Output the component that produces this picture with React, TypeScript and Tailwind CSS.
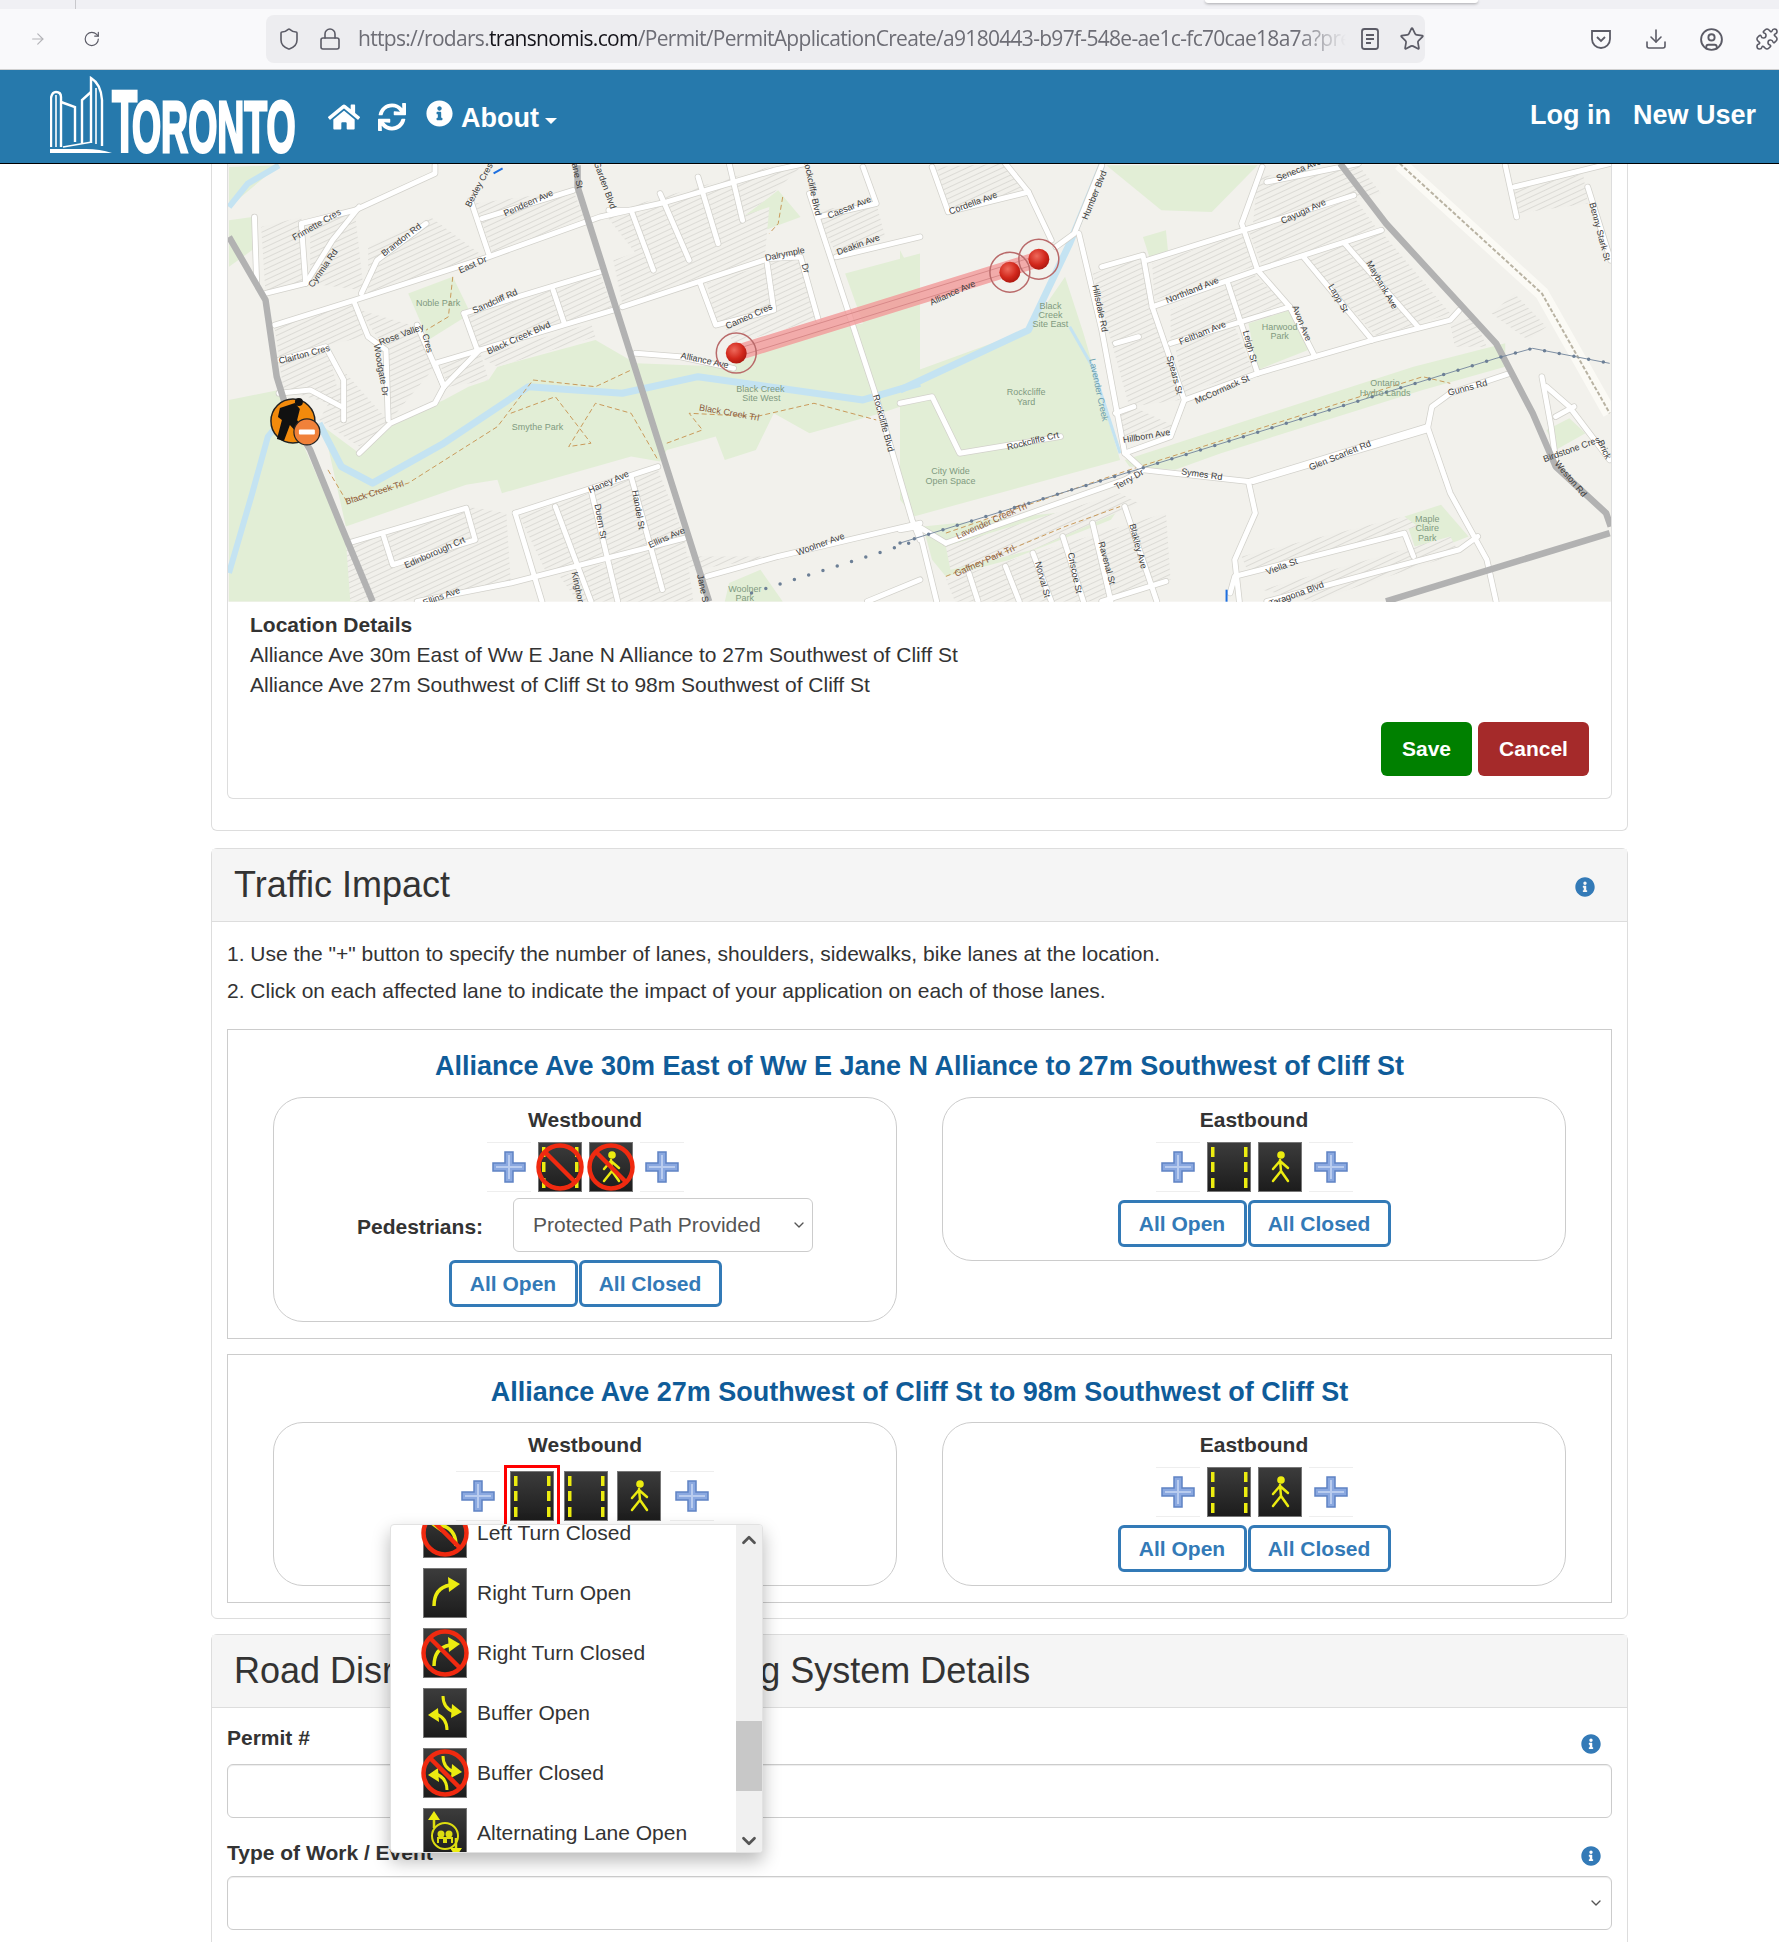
import React from 'react';
import { ArrowRight, RotateCw, Shield, Lock, Star, Download, CircleUser, Puzzle, ChevronUp, ChevronDown } from 'lucide-react';
import { FaHome, FaSync, FaInfoCircle } from 'react-icons/fa';

// the map data is read off the reference in two crops, so each side has its own conversion
const L = (x: number, y: number) => [220 + x / 2.24, 160 + y / 3];
const R = (x: number, y: number) => [900 + x / 2.178, 160 + y / 3];
const pts = (conv: typeof L, p: number[]) => {
  const out: string[] = [];
  for (let i = 0; i < p.length; i += 2) out.push(conv(p[i], p[i + 1]).map((n) => n.toFixed(1)).join(','));
  return out.join(' ');
};

const leftGreen = [
  [18, 720, 130, 690, 340, 1325, 18, 1325],
  [230, 800, 280, 1100, 550, 975, 620, 960, 630, 1000, 920, 890, 985, 905, 1000, 870, 1110, 830, 1130, 900, 1200, 870, 1240, 760, 1320, 820, 1480, 760, 1568, 720, 1568, 280, 1400, 340, 1440, 490, 1340, 510, 1170, 600, 1140, 620, 930, 610, 840, 540, 620, 620, 600, 660, 555, 680, 500, 720, 400, 780, 310, 880],
  [18, 180, 70, 170, 80, 260, 18, 320],
  [420, 400, 520, 350, 560, 460, 465, 540],
  [1120, 220, 1250, 90, 1300, 170, 1200, 220, 1130, 270],
  [1130, 1325, 1140, 1270, 1210, 1230, 1260, 1325],
  [18, 20, 130, 15, 18, 140],
];
const rightGreen = [
  [0, 270, 45, 390, 0, 440],
  [0, 650, 280, 510, 360, 350, 400, 520, 480, 900, 30, 1070, 0, 1020],
  [490, 900, 1120, 620, 1320, 550, 1320, 620, 1140, 690, 700, 880, 600, 930, 500, 920],
  [450, 15, 780, 15, 680, 155, 570, 150],
  [530, 230, 580, 210, 585, 280, 545, 295],
  [760, 490, 850, 450, 890, 570, 780, 630],
  [1100, 1070, 1180, 1035, 1240, 1130, 1130, 1190],
  [1410, 810, 1460, 775, 1495, 820, 1430, 870],
  [50, 1100, 480, 1040, 460, 1080, 240, 1200, 100, 1250, 70, 1200],
];
const leftHatch = [
  [90, 200, 180, 170, 190, 370, 100, 400],
  [200, 190, 300, 150, 320, 390, 200, 370],
  [330, 260, 470, 170, 590, 290, 330, 400],
  [570, 130, 790, 90, 820, 190, 610, 280],
  [860, 160, 1230, 20, 1300, 20, 1230, 110, 1040, 300, 960, 330],
  [550, 470, 850, 340, 880, 450, 580, 570],
  [310, 450, 440, 500, 480, 620, 380, 780, 370, 570],
  [130, 600, 240, 560, 270, 740, 140, 690],
  [1090, 370, 1230, 310, 1240, 440, 1110, 490],
  [1240, 300, 1300, 290, 1340, 480, 1150, 550, 1130, 500],
  [280, 1140, 550, 1040, 640, 1060, 650, 1270, 400, 1325, 290, 1325],
  [670, 1070, 980, 930, 1040, 1130, 730, 1240],
  [760, 1250, 1040, 1140, 1060, 1325, 800, 1325],
  [1330, 150, 1470, 130, 1490, 230, 1380, 280],
  [490, 610, 580, 570, 600, 660, 510, 680],
  [580, 590, 830, 490, 840, 530, 620, 620],
  [880, 300, 1230, 140, 1220, 290, 900, 430],
  [280, 640, 380, 790, 310, 860, 220, 780],
  [120, 500, 300, 430, 320, 530, 130, 590],
  [1010, 1190, 1250, 1190, 1060, 1230],
];
const rightHatch = [
  [420, 340, 530, 290, 610, 720, 500, 740],
  [470, 760, 510, 740, 600, 800, 490, 830],
  [550, 310, 750, 220, 770, 320, 555, 420],
  [760, 210, 990, 110, 1040, 205, 790, 320],
  [590, 450, 770, 340, 840, 430, 590, 540],
  [880, 290, 1050, 215, 1200, 460, 1040, 530],
  [600, 560, 730, 500, 770, 630, 620, 700],
  [80, 20, 230, 10, 280, 90, 105, 150],
  [780, 50, 1000, 15, 1050, 100, 770, 190],
  [1340, 90, 1490, 40, 1500, 130, 1345, 160],
  [100, 1160, 480, 1000, 520, 1030, 290, 1170, 110, 1230],
  [100, 1260, 580, 1060, 590, 1260, 440, 1325, 120, 1325],
  [745, 1190, 1100, 1070, 1130, 1100, 760, 1240],
  [790, 1290, 1200, 1130, 1220, 1180, 900, 1325],
  [1290, 460, 1340, 400, 1410, 500, 1370, 540],
  [1200, 490, 1250, 470, 1280, 560, 1210, 560],
];
const leftRoads = [
  [120, 495, 300, 420, 600, 290, 850, 170, 1000, 125, 1240, 30, 1310, 10],
  [480, 610, 580, 570, 880, 450],
  [900, 440, 1230, 295, 1300, 290, 1340, 480],
  [545, 460, 850, 335],
  [545, 460, 575, 570],
  [745, 390, 770, 490],
  [100, 400, 190, 370, 180, 190, 300, 150, 480, 40, 480, 15],
  [190, 370, 250, 240, 310, 140],
  [315, 400, 350, 300, 460, 190],
  [300, 430, 330, 530, 370, 570, 375, 780],
  [440, 495, 500, 680, 480, 730, 380, 790, 310, 880],
  [130, 700, 200, 690, 270, 740],
  [130, 600, 235, 560, 275, 660, 275, 780],
  [585, 175, 790, 90],
  [560, 120, 600, 280],
  [480, 610, 500, 680],
  [580, 570, 500, 680],
  [870, 150, 920, 150, 970, 330],
  [985, 100, 1050, 300],
  [1070, 50, 1115, 250],
  [1140, 10, 1170, 180],
  [1320, 100, 1465, 690, 1550, 1080, 1568, 1140],
  [1340, 170, 1470, 130, 1440, 20],
  [1380, 290, 1568, 230],
  [1075, 370, 1110, 495, 1240, 450, 1225, 310],
  [930, 580, 1030, 590, 1150, 625],
  [660, 1060, 980, 920],
  [285, 1150, 550, 1045, 570, 1140, 385, 1215, 365, 1130],
  [660, 1060, 720, 1325],
  [750, 1040, 830, 1325],
  [830, 990, 890, 1325],
  [920, 950, 990, 1290],
  [440, 1325, 650, 1270, 1040, 1135],
  [1090, 1250, 1250, 1190, 1568, 1090],
  [1450, 1325, 1568, 1260],
  [75, 170, 80, 370],
];
const rightRoads = [
  [440, 15, 380, 220, 340, 260],
  [390, 220, 440, 510, 490, 880, 530, 930, 760, 965, 1150, 800],
  [70, 20, 105, 155, 280, 95, 330, 240],
  [280, 95, 230, 10],
  [800, 65, 1000, 10],
  [790, 20, 745, 190, 780, 330, 850, 440, 905, 590],
  [540, 300, 750, 210, 990, 105],
  [440, 320, 530, 285, 550, 440, 620, 720, 590, 830, 490, 880],
  [550, 440, 780, 330, 1050, 210],
  [590, 550, 850, 440],
  [715, 370, 780, 640],
  [620, 720, 780, 640, 1030, 540, 1200, 480, 1220, 450],
  [880, 290, 1030, 540],
  [970, 250, 1130, 500],
  [0, 730, 70, 710, 130, 880, 350, 830],
  [100, 1150, 490, 960, 530, 930],
  [770, 965, 1150, 810, 1160, 740, 1200, 700, 1330, 640],
  [1150, 800, 1200, 1000, 1280, 1200, 1300, 1325],
  [760, 965, 775, 1060, 730, 1200, 740, 1325],
  [720, 1300, 730, 1250, 1100, 1120, 1120, 1190],
  [800, 1325, 1220, 1170, 1260, 1130],
  [490, 1040, 560, 1325],
  [420, 1090, 460, 1325],
  [355, 1130, 400, 1325],
  [290, 1180, 330, 1325],
  [150, 1240, 170, 1325],
  [230, 1220, 260, 1325],
  [440, 1325, 580, 1265],
  [0, 1110, 40, 1100, 80, 1325],
  [40, 1100, 100, 1150],
  [1500, 80, 1550, 300],
  [1320, 15, 1345, 170],
  [1340, 80, 1548, 10],
  [1400, 650, 1420, 800, 1430, 900],
  [1410, 680, 1460, 740, 1548, 900],
  [1430, 770, 1470, 740],
  [470, 550, 520, 530],
  [470, 760, 510, 740],
];

type Label = [string, number, number, number, string?];
const GREEN = '#7f9a80';
const TRAIL = '#8a5a3c';
const leftLabels: Label[] = [
  ['Frimette Cres', 215, 195, -30], ['Bexley Cres', 580, 75, -62], ['Pendeen Ave', 690, 130, -24], ['Garden Blvd', 860, 75, 70],
  ['Brandon Rd', 405, 240, -38], ['Cynmia Rd', 230, 325, -55], ['East Dr', 565, 315, -24], ['Noble Park', 487, 432, 0, GREEN],
  ['Sandcliff Rd', 615, 425, -24], ['Rose Valley', 405, 525, -20], ['Cres', 462, 550, 75], ['Woodgate Dr', 358, 630, 80],
  ['Clairton Cres', 187, 585, -15], ['Black Creek Blvd', 668, 535, -24], ['Alliance Ave', 1085, 603, 12], ['Cameo Cres', 1185, 470, -24],
  ['Dalrymple', 1265, 283, -12], ['Dr', 1310, 325, 75], ['Caesar Ave', 1410, 143, -22], ['Deakin Ave', 1430, 255, -20],
  ['Rockcliffe Blvd', 1325, 80, 78], ['Rockcliffe Blvd', 1485, 790, 75], ['Black Creek', 1210, 690, 0, GREEN], ['Site West', 1212, 717, 0, GREEN],
  ['Smythe Park', 710, 803, 0, GREEN], ['Black Creek Trl', 345, 1000, -18, TRAIL], ['Black Creek Trl', 1140, 760, 10, TRAIL],
  ['Haney Ave', 870, 968, -24], ['Duern St', 850, 1085, 80], ['Handel St', 935, 1050, 80], ['Ellins Ave', 1000, 1135, -24],
  ['Edinborough Crt', 480, 1180, -24], ['Woolner Ave', 1345, 1155, -20], ['Jane St', 1080, 1290, 78], ['Jane St', 797, 40, 78],
  ['Woolner', 1175, 1290, 0, GREEN], ['Park', 1175, 1318, 0, GREEN], ['Ellins Ave', 495, 1312, -20], ['Kinghorn', 800, 1290, 78],
];
const rightLabels: Label[] = [
  ['Cordella Ave', 160, 130, -20], ['Humber Blvd', 425, 105, -68], ['Seneca Ave', 870, 30, -22], ['Cayuga Ave', 880, 155, -24],
  ['Northland Ave', 638, 392, -22], ['Feltham Ave', 660, 520, -22], ['Leigh St', 762, 560, 75], ['Avon Ave', 875, 490, 68],
  ['Lapp St', 955, 415, 60], ['Maybank Ave', 1050, 375, 60], ['Harwood', 828, 503, 0, GREEN], ['Park', 828, 530, 0, GREEN],
  ['Hillsdale Rd', 435, 445, 78], ['Spears St', 598, 645, 75], ['McCormack St', 703, 690, -24], ['Alliance Ave', 115, 400, -24],
  ['Black', 328, 440, 0, GREEN], ['Creek', 328, 466, 0, GREEN], ['Site East', 328, 493, 0, GREEN], ['Rockcliffe', 275, 697, 0, GREEN],
  ['Yard', 275, 727, 0, GREEN], ['Rockcliffe Crt', 290, 845, -14], ['Hillborn Ave', 538, 830, -10], ['Ontario', 1058, 672, 0, GREEN],
  ['Hydro Lands', 1058, 700, 0, GREEN], ['Gunns Rd', 1238, 685, -15], ['Glen Scarlett Rd', 960, 888, -22], ['Symes Rd', 658, 945, 8],
  ['Terry Dr', 500, 960, -30], ['City Wide', 110, 936, 0, GREEN], ['Open Space', 110, 964, 0, GREEN], ['Lavender Creek Trl', 200, 1085, -24, TRAIL],
  ['Gaffney Park Trl', 185, 1205, -24, TRAIL], ['Blakley Ave', 518, 1160, 75], ['Ravenal St', 450, 1210, 75], ['Criscoe St', 380, 1240, 78],
  ['Norval St', 310, 1260, 75], ['Viella St', 833, 1222, -20], ['Taragona Blvd', 865, 1305, -20], ['Maple', 1150, 1080, 0, GREEN],
  ['Claire', 1150, 1108, 0, GREEN], ['Park', 1150, 1136, 0, GREEN], ['Birdstone Cres', 1465, 870, -20], ['Weston Rd', 1462, 958, 50],
  ['Benny Stark St', 1525, 215, 75], ['Brick', 1535, 870, 65], ['Lavender Creek', 432, 690, 78, '#6d9fae'],
];

const TrafficMap = () => {
  const label = (conv: typeof L, l: Label, i: number) => {
    const [x, y] = conv(l[1], l[2]);
    return (
      <text key={i} x={x} y={y} fontSize={9} fill={l[4] || '#3a3a3a'} textAnchor="middle" dominantBaseline="middle" transform={`rotate(${l[3]} ${x} ${y})`}>
        {l[0]}
      </text>
    );
  };
  const road = (conv: typeof L, p: number[], i: number, color: string, w: number) => (
    <polyline key={i} points={pts(conv, p)} fill="none" stroke={color} strokeWidth={w} strokeLinejoin="round" strokeLinecap="round" />
  );
  return (
    <svg viewBox="227 164 1385 438" className="block w-full h-[438px] font-['Liberation_Sans',sans-serif]">
      <defs>
        <pattern id="hatch" width="5" height="5" patternUnits="userSpaceOnUse" patternTransform="rotate(65)">
          <rect width="5" height="5" fill="#f1f0eb" />
          <line x1="0" y1="0" x2="0" y2="5" stroke="#cfcec8" strokeWidth="1.2" />
        </pattern>
        <radialGradient id="pin" cx="0.4" cy="0.35" r="0.7">
          <stop offset="0" stopColor="#ee6a5c" />
          <stop offset="0.6" stopColor="#d2281c" />
          <stop offset="1" stopColor="#a8160e" />
        </radialGradient>
      </defs>
      <rect x="227" y="164" width="1385" height="438" fill="#f2f1ec" />
      {leftGreen.map((p, i) => <polygon key={i} points={pts(L, p)} fill="#e2eed6" />)}
      {rightGreen.map((p, i) => <polygon key={i} points={pts(R, p)} fill="#e2eed6" />)}
      {leftHatch.map((p, i) => <polygon key={i} points={pts(L, p)} fill="url(#hatch)" />)}
      {rightHatch.map((p, i) => <polygon key={i} points={pts(R, p)} fill="url(#hatch)" />)}

      {/* creeks */}
      <polyline points={pts(L, [18, 1240, 70, 1000, 105, 830, 130, 790])} fill="none" stroke="#c4e3f2" strokeWidth={6} />
      <polyline points={pts(L, [18, 140, 60, 70, 130, 15])} fill="none" stroke="#c4e3f2" strokeWidth={6} />
      <polyline points={pts(L, [220, 790, 270, 920, 340, 970, 500, 850, 690, 680, 900, 700, 1070, 650, 1440, 720, 1568, 670])} fill="none" stroke="#c4e3f2" strokeWidth={7} strokeLinejoin="round" />
      <polyline points={pts(R, [0, 690, 280, 510, 370, 250, 440, 15])} fill="none" stroke="#c4e3f2" strokeWidth={7} strokeLinejoin="round" />
      <polyline points={pts(R, [370, 500, 420, 620, 480, 880])} fill="none" stroke="#c4e3f2" strokeWidth={3} />

      {/* rail, then trails */}
      <polyline points={pts(R, [1090, 10, 1400, 400, 1548, 760])} fill="none" stroke="#fbfaf5" strokeWidth={14} />
      <polyline points={pts(R, [1090, 10, 1400, 400, 1548, 760])} fill="none" stroke="#b9b3a3" strokeWidth={2} strokeDasharray="4 2" />
      <g fill="none" stroke="#c99a5a" strokeWidth={1} strokeDasharray="5 3">
        <polyline points={pts(L, [240, 930, 280, 1020, 420, 970, 620, 800, 700, 660, 840, 680, 920, 630])} />
        <polyline points={pts(L, [650, 760, 750, 710, 830, 850, 780, 860, 840, 730, 920, 760, 980, 900])} />
        <polyline points={pts(L, [1000, 850, 1080, 810, 1050, 760, 1200, 770, 1330, 730, 1470, 780])} />
        <polyline points={pts(L, [520, 350, 510, 470, 460, 510])} />
        <polyline points={pts(L, [1260, 110, 1250, 190, 1230, 220])} />
        <polyline points={pts(R, [100, 1120, 500, 930, 1140, 650, 1200, 670])} />
        <polyline points={pts(R, [100, 1250, 360, 1100, 480, 1040])} />
      </g>

      {leftRoads.map((p, i) => road(L, p, i, '#d2d1cb', 6.5))}
      {rightRoads.map((p, i) => road(R, p, i, '#d2d1cb', 6.5))}
      {leftRoads.map((p, i) => road(L, p, i, '#ffffff', 5))}
      {rightRoads.map((p, i) => road(R, p, i, '#ffffff', 5))}

      {/* highways */}
      <g fill="none" stroke="#b2b2b2" strokeWidth={6.5} strokeLinejoin="round">
        <polyline points={pts(L, [800, 15, 800, 80, 1095, 1325])} />
        <polyline points={pts(L, [18, 230, 100, 420, 125, 650, 150, 760, 200, 870, 270, 1100, 340, 1325])} />
        <polyline points={pts(R, [960, 10, 1060, 190, 1300, 550, 1380, 760, 1430, 920, 1540, 1060, 1550, 1100])} />
        <polyline points={pts(R, [1060, 1325, 1548, 1120])} />
      </g>

      {/* hydro corridor */}
      <polyline points={pts(R, [0, 1150, 1300, 595, 1380, 565, 1548, 610])} fill="none" stroke="#7d8fa3" strokeWidth={1} />
      <polyline points={pts(R, [0, 1150, 1300, 595, 1380, 565, 1548, 610])} fill="none" stroke="#6c7f96" strokeWidth={3.5} strokeLinecap="round" strokeDasharray="0 15" />
      <polyline points={pts(L, [1190, 1300, 1568, 1140])} fill="none" stroke="#6c7f96" strokeWidth={3.5} strokeLinecap="round" strokeDasharray="0 15" />

      {/* selected road segment */}
      <line x1="736" y1="353" x2="1039" y2="259" stroke="#f39a9a" strokeWidth={16} opacity={0.8} />
      <line x1="736" y1="349" x2="1039" y2="255" stroke="#d88a8a" strokeWidth={1} />
      <line x1="736" y1="357" x2="1039" y2="263" stroke="#d88a8a" strokeWidth={1} />

      {leftLabels.map((l, i) => label(L, l, i))}
      {rightLabels.map((l, i) => label(R, l, i))}
      <path d="M493 173 L502 168" stroke="#1d6fe0" strokeWidth={2} />
      <path d="M1227 590 V602" stroke="#1d6fe0" strokeWidth={2} />

      {[[736, 353], [1010, 272], [1039, 259]].map(([x, y]) => (
        <g key={x}>
          <circle cx={x} cy={y} r={20} fill="none" stroke="#b96a6a" strokeWidth={1.5} />
          <circle cx={x} cy={y} r={10.5} fill="url(#pin)" />
        </g>
      ))}

      {/* work zone marker */}
      <circle cx="292" cy="421" r="22" fill="#f28a0c" stroke="#222" strokeWidth={1.5} />
      <path d="M279 408 L294 403 L299 409 L296 421 L303 432 L298 435 L289 425 L283 441 L276 439 L281 420 L277 417 Z" fill="#111" />
      <circle cx="298" cy="402" r="4" fill="#111" />
      <path d="M294 419 L306 435" stroke="#111" strokeWidth={2} />
      <circle cx="306" cy="432" r="13" fill="#f0813a" stroke="#222" strokeWidth={1.2} />
      <rect x="298" y="429.5" width="16" height="5" rx="1" fill="#fff" />
    </svg>
  );
};

const NoSign = () => (
  <g fill="none" stroke="#f02a10" strokeWidth={4.5}>
    <circle cx="22" cy="25" r="21.5" />
    <line x1="7" y1="10" x2="37" y2="40" />
  </g>
);

// one lane tile of the traffic impact widget
const LaneIcon = ({ kind, closed }: { kind: 'lane' | 'ped' | 'left' | 'right' | 'buffer' | 'alt'; closed?: boolean }) => (
  <svg width="44" height="50" viewBox="0 0 44 50" className="overflow-visible shrink-0">
    <defs>
      <linearGradient id="tile" x1="0" y1="0" x2="0" y2="1">
        <stop offset="0" stopColor="#3c3c3c" />
        <stop offset="1" stopColor="#1c1c1c" />
      </linearGradient>
    </defs>
    <rect x="0.5" y="0.5" width="43" height="49" fill="url(#tile)" stroke="#777" />
    {kind === 'lane' && (
      <g fill="#ecec10">
        {[5, 20, 36].map((y) => (
          <React.Fragment key={y}>
            <rect x="4" y={y} width="3.5" height="10" />
            <rect x="37" y={y} width="3.5" height="10" />
          </React.Fragment>
        ))}
      </g>
    )}
    {kind === 'ped' && (
      <g stroke="#ecec10" strokeWidth={2.5} fill="none" strokeLinecap="round" strokeLinejoin="round">
        <circle cx="23" cy="13" r="3.8" fill="#ecec10" strokeWidth={0} />
        <path d="M22 18 L23 29 L15 39 M23 29 L30 39 M22 19 L15 27 M22 19 L30 26" />
      </g>
    )}
    {kind === 'right' && (
      <g stroke="#ecec10" fill="none" strokeWidth={3.5}>
        <path d="M11 38 Q11 20 27 17" />
        <path d="M25 9 L37 16 L26 24 Z" fill="#ecec10" strokeWidth={0} />
      </g>
    )}
    {kind === 'left' && (
      <g stroke="#ecec10" fill="none" strokeWidth={3.5}>
        <path d="M33 38 Q33 20 17 17" />
        <path d="M19 9 L7 16 L18 24 Z" fill="#ecec10" strokeWidth={0} />
      </g>
    )}
    {kind === 'buffer' && (
      <g stroke="#ecec10" fill="none" strokeWidth={3}>
        <path d="M20 8 Q20 20 31 24" />
        <path d="M29 16 L39 24 L28 30 Z" fill="#ecec10" strokeWidth={0} />
        <path d="M24 42 Q24 30 13 26" />
        <path d="M15 20 L5 27 L16 34 Z" fill="#ecec10" strokeWidth={0} />
      </g>
    )}
    {kind === 'alt' && (
      <g stroke="#dcdc10" fill="none" strokeWidth={2}>
        <path d="M11 6 V20 M33 30 V46" strokeWidth={2.5} />
        <path d="M5 12 L11 3 L17 12 Z M27 40 L33 49 L39 40 Z" fill="#ecec10" strokeWidth={0} />
        <circle cx="22" cy="28" r="13" />
        <circle cx="18" cy="26" r="2.5" fill="#dcdc10" />
        <circle cx="26" cy="26" r="2.5" fill="#dcdc10" />
        <path d="M15 35 V30 H21 V35 M23 35 V30 H29 V35" />
      </g>
    )}
    {closed && <NoSign />}
  </svg>
);

const PlusTile = () => (
  <div className="w-[44px] h-[50px] border-y border-[#eeeeee] flex items-center justify-center shrink-0">
    <svg width="34" height="32" viewBox="0 0 34 32">
      <path d="M13 1 H21 V12 H33 V20 H21 V31 H13 V20 H1 V12 H13 Z" fill="#8aa8e0" stroke="#5f82c4" strokeWidth={1.5} />
      <path d="M17 4 V28 M4 16 H30" stroke="#b9ccef" strokeWidth={2} />
    </svg>
  </div>
);

const OpenClosed = () => (
  <div className="flex justify-center gap-px">
    <button className="h-[47px] w-[129px] border-[3px] border-[#337ab7] rounded-md bg-white text-[21px] font-bold text-[#337ab7]">All Open</button>
    <button className="h-[47px] w-[143px] border-[3px] border-[#337ab7] rounded-md bg-white text-[21px] font-bold text-[#337ab7]">All Closed</button>
  </div>
);

const Eastbound = () => (
  <div className="w-[624px] h-[164px] border border-[#cccccc] rounded-[30px] pt-[7px]">
    <div className="text-[21px] leading-[30px] font-bold text-center">Eastbound</div>
    <div className="flex justify-center gap-[7px] mt-[7px] mb-[8px]">
      <PlusTile />
      <LaneIcon kind="lane" />
      <LaneIcon kind="ped" />
      <PlusTile />
    </div>
    <OpenClosed />
  </div>
);

const dropdownItems: { name: string; kind: 'left' | 'right' | 'buffer' | 'alt'; closed?: boolean }[] = [
  { name: 'Left Turn Closed', kind: 'left', closed: true },
  { name: 'Right Turn Open', kind: 'right' },
  { name: 'Right Turn Closed', kind: 'right', closed: true },
  { name: 'Buffer Open', kind: 'buffer' },
  { name: 'Buffer Closed', kind: 'buffer', closed: true },
  { name: 'Alternating Lane Open', kind: 'alt' },
];

const LaneDropdown = () => (
  <div className="absolute left-[390px] top-[1524px] w-[373px] h-[329px] bg-white rounded-sm border border-[#e2e2e2] shadow-[0_8px_18px_rgba(0,0,0,0.28)] flex overflow-hidden z-10">
    <div className="flex-1 -mt-[22px]">
      {dropdownItems.map((item) => (
        <div key={item.name} className="h-[60px] pl-[32px] flex items-center gap-[10px] text-[21px]">
          <LaneIcon kind={item.kind} closed={item.closed} />
          <span>{item.name}</span>
        </div>
      ))}
    </div>
    <div className="relative w-[26px] bg-[#f0f0f0]">
      <div className="mt-[196px] h-[70px] bg-[#c8c8c8]" />
      <ChevronUp className="absolute top-[4px] left-[2px] text-[#555555]" size={22} strokeWidth={3} />
      <ChevronDown className="absolute bottom-[0px] left-[2px] text-[#555555]" size={22} strokeWidth={3} />
    </div>
  </div>
);

const BrowserBar = () => (
  <>
    <div className="h-[9px] bg-[#f0f0f4] relative">
      <div className="absolute left-[75px] top-0 w-px h-[9px] bg-[#c8c8cc]" />
      <div className="absolute left-[1205px] top-0 w-[273px] h-[3px] bg-white rounded-b shadow-[0_1px_3px_rgba(0,0,0,0.3)]" />
    </div>
    <div className="h-[61px] bg-[#f9f9fb] border-b border-[#d0d0d0] flex items-center relative overflow-hidden">
      <ArrowRight className="ml-[29px] text-[#b4b4b8]" size={24} strokeWidth={1.6} />
      <RotateCw className="ml-[36px] text-[#5b5b66]" size={24} strokeWidth={1.6} />
      <div className="ml-[166px] w-[1174px] h-[48px] bg-[#ededf0] rounded-lg flex items-center pl-[11px]">
        <Shield className="text-[#5b5b66] shrink-0" size={24} strokeWidth={1.6} />
        <Lock className="ml-[17px] text-[#5b5b66] shrink-0" size={24} strokeWidth={1.6} />
        <div className="ml-[16px] w-[988px] overflow-hidden whitespace-nowrap text-[21px] text-[#6d6d75] font-['Open_Sans',sans-serif] tracking-[-0.7px] [mask-image:linear-gradient(to_left,transparent,black_50px)]">
          https://rodars.<span className="text-[#15141a]">transnomis.com</span>/Permit/PermitApplicationCreate/a9180443-b97f-548e-ae1c-fc70cae18a7a?preview=true
        </div>
        <svg width="20" height="24" viewBox="0 0 20 24" className="ml-[14px] shrink-0" fill="none" stroke="#5b5b66" strokeWidth={1.8}>
          <rect x="2" y="2" width="16" height="20" rx="2.5" />
          <path d="M6 8 H14 M6 12 H14 M6 16 H11" />
        </svg>
        <Star className="ml-[19px] text-[#5b5b66] shrink-0" size={26} strokeWidth={1.6} />
      </div>
      <svg width="24" height="24" viewBox="0 0 24 24" className="ml-[164px] shrink-0" fill="none" stroke="#5b5b66" strokeWidth={1.8}>
        <path d="M3 4 H21 V12 A9 9 0 0 1 3 12 Z" />
        <path d="M8 10 L12 14 L16 10" />
      </svg>
      <Download className="ml-[31px] text-[#5b5b66] shrink-0" size={24} strokeWidth={1.6} />
      <CircleUser className="ml-[31px] text-[#5b5b66] shrink-0" size={25} strokeWidth={1.8} />
      <Puzzle className="ml-[31px] text-[#5b5b66] shrink-0" size={24} strokeWidth={1.6} />
    </div>
  </>
);

const Navbar = () => (
  <div className="h-[94px] bg-[#2679ac] border-b border-black flex items-center text-white font-bold pl-[50px] pr-[23px]">
    <svg width="62" height="78" viewBox="50 76 62 78" className="shrink-0 -mt-[3px]" fill="none" stroke="#fff" strokeWidth={2.4}>
      <path d="M51 147 V98 Q52 92 56 92 Q61 92 61 97 V147" />
      <path d="M56 95 V147" strokeWidth={1.6} />
      <path d="M61 102 L75 107 V142" />
      <path d="M82 143 V100 L91 92" />
      <path d="M91 143 V78 Q101 84 102 100 V146" />
      <path d="M96 88 V144" strokeWidth={1.6} />
      <path d="M63 147 L92 142" strokeWidth={1.6} />
      <path d="M50 149 H86 Q100 149 112 153 H50 Z" fill="#fff" strokeWidth={0} />
    </svg>
    <div className="w-[185px] h-[64px] relative -mt-[3px] font-['Liberation_Sans',sans-serif]">
      <span className="absolute left-0 top-[-6px] text-[88px] leading-[88px] origin-left scale-x-[0.47] [-webkit-text-stroke:3px_white]">T</span>
      <span className="absolute left-[20px] top-[8px] text-[72px] leading-[72px] origin-left scale-x-[0.52] [-webkit-text-stroke:3px_white]">ORONTO</span>
    </div>
    <FaHome className="ml-[31px]" size={32} />
    <FaSync className="ml-[18px]" size={28} />
    <FaInfoCircle className="ml-[20px] -mt-[6px]" size={27} />
    <span className="ml-[8px] mt-[3px] text-[27px]">About</span>
    <span className="ml-[6px] mt-[9px] w-0 h-0 border-x-[6px] border-x-transparent border-t-[6px] border-t-white" />
    <span className="ml-auto text-[27px] -mt-[2px]">Log in</span>
    <span className="ml-[22px] text-[27px] -mt-[2px]">New User</span>
  </div>
);

const CardHeader = ({ title, info }: { title: string; info?: boolean }) => (
  <div className="h-[73px] bg-[#f5f5f5] border-b border-[#dddddd] flex items-center justify-between pl-[22px] pr-[32px]">
    <h3 className="text-[36px] text-[#333333]">{title}</h3>
    {info && <FaInfoCircle className="text-[#337ab7] mt-[3px]" size={20} />}
  </div>
);

export default function App() {
  return (
    <div className="relative h-[1942px] overflow-hidden bg-white font-['Liberation_Sans',Arial,sans-serif] text-[#333333]">
      <BrowserBar />
      <Navbar />
      <main className="ml-[211px] w-[1417px]">
        {/* location card, scrolled so its top is cut off by the navbar */}
        <section className="h-[667px] border-x border-b border-[#dddddd] rounded-b-md px-[15px]">
          <div className="h-[635px] border-x border-b border-[#dddddd] rounded-b-md">
            <TrafficMap />
            <div className="pl-[22px] pr-[22px] pt-[8px] text-[21px] leading-[30px]">
              <div className="font-bold">Location Details</div>
              <div>Alliance Ave 30m East of Ww E Jane N Alliance to 27m Southwest of Cliff St</div>
              <div>Alliance Ave 27m Southwest of Cliff St to 98m Southwest of Cliff St</div>
              <div className="flex justify-end gap-[6px] mt-[22px]">
                <button className="h-[54px] w-[91px] bg-[#008000] text-white font-bold rounded-md">Save</button>
                <button className="h-[54px] w-[111px] bg-[#a52a2a] text-white font-bold rounded-md">Cancel</button>
              </div>
            </div>
          </div>
        </section>

        <section className="mt-[17px] h-[771px] border border-[#dddddd] rounded-md">
          <CardHeader title="Traffic Impact" info />
          <div className="px-[15px] pt-[13px]">
            <div className="text-[21px] leading-[37px] mb-[20px]">
              <p>1. Use the "+" button to specify the number of lanes, shoulders, sidewalks, bike lanes at the location.</p>
              <p>2. Click on each affected lane to indicate the impact of your application on each of those lanes.</p>
            </div>

            <div className="h-[310px] border border-[#cccccc] px-[45px]">
              <h4 className="text-[27px] leading-[36px] font-bold text-[#0f5c99] text-center pt-[18px] h-[67px]">
                Alliance Ave 30m East of Ww E Jane N Alliance to 27m Southwest of Cliff St
              </h4>
              <div className="flex justify-between">
                <div className="w-[624px] h-[225px] border border-[#cccccc] rounded-[30px] pt-[7px]">
                  <div className="text-[21px] leading-[30px] font-bold text-center">Westbound</div>
                  <div className="flex justify-center gap-[7px] mt-[7px]">
                    <PlusTile />
                    <LaneIcon kind="lane" closed />
                    <LaneIcon kind="ped" closed />
                    <PlusTile />
                  </div>
                  <div className="flex justify-center items-center mt-[6px] mb-[8px] pr-px">
                    <label className="text-[21px] font-bold mt-[4px] w-[157px] pl-[1px]">Pedestrians:</label>
                    <div className="relative">
                      <select className="appearance-none w-[300px] h-[54px] border border-[#cccccc] rounded-md pl-[19px] text-[21px] text-[#555555] bg-white">
                        <option>Protected Path Provided</option>
                      </select>
                      <ChevronDown className="absolute right-[6px] top-[19px] text-[#555555] pointer-events-none" size={16} strokeWidth={2} />
                    </div>
                  </div>
                  <OpenClosed />
                </div>
                <Eastbound />
              </div>
            </div>

            <div className="mt-[15px] h-[249px] border border-[#cccccc] px-[45px]">
              <h4 className="text-[27px] leading-[36px] font-bold text-[#0f5c99] text-center pt-[19px] h-[67px]">
                Alliance Ave 27m Southwest of Cliff St to 98m Southwest of Cliff St
              </h4>
              <div className="flex justify-between">
                <div className="w-[624px] h-[164px] border border-[#cccccc] rounded-[30px] pt-[7px]">
                  <div className="text-[21px] leading-[30px] font-bold text-center">Westbound</div>
                  <div className="flex justify-center items-center gap-[3px] mt-[7px] h-[57px]">
                    <PlusTile />
                    <div className="border-[3px] border-[#ff0000] p-[3px] mx-[1px] leading-[0]"><LaneIcon kind="lane" /></div>
                    <LaneIcon kind="lane" />
                    <div className="w-[3px]" />
                    <LaneIcon kind="ped" />
                    <div className="w-[3px]" />
                    <PlusTile />
                  </div>
                  <OpenClosed />
                </div>
                <Eastbound />
              </div>
            </div>
          </div>
        </section>

        <section className="mt-[15px] h-[400px] border border-[#dddddd] rounded-md">
          <CardHeader title="Road Disruption Activity Reporting System Details" />
          <div className="px-[15px] pt-[15px]">
            <div className="flex justify-between items-center h-[30px] pr-[11px]">
              <label className="text-[21px] font-bold">Permit #</label>
              <FaInfoCircle className="text-[#337ab7] mt-[12px]" size={20} />
            </div>
            <input className="block mt-[11px] w-full h-[54px] border border-[#cccccc] rounded-md shadow-[inset_0_1px_1px_rgba(0,0,0,0.075)]" />
            <div className="flex justify-between items-center h-[30px] mt-[20px] pr-[11px]">
              <label className="text-[21px] font-bold">Type of Work / Event</label>
              <FaInfoCircle className="text-[#337ab7] mt-[6px]" size={20} />
            </div>
            <div className="relative mt-[8px]">
              <select className="appearance-none block w-full h-[54px] border border-[#cccccc] rounded-md bg-white shadow-[inset_0_1px_1px_rgba(0,0,0,0.075)]" />
              <ChevronDown className="absolute right-[8px] top-[19px] text-[#555555] pointer-events-none" size={16} strokeWidth={2} />
            </div>
          </div>
        </section>
      </main>
      <LaneDropdown />
    </div>
  );
}
